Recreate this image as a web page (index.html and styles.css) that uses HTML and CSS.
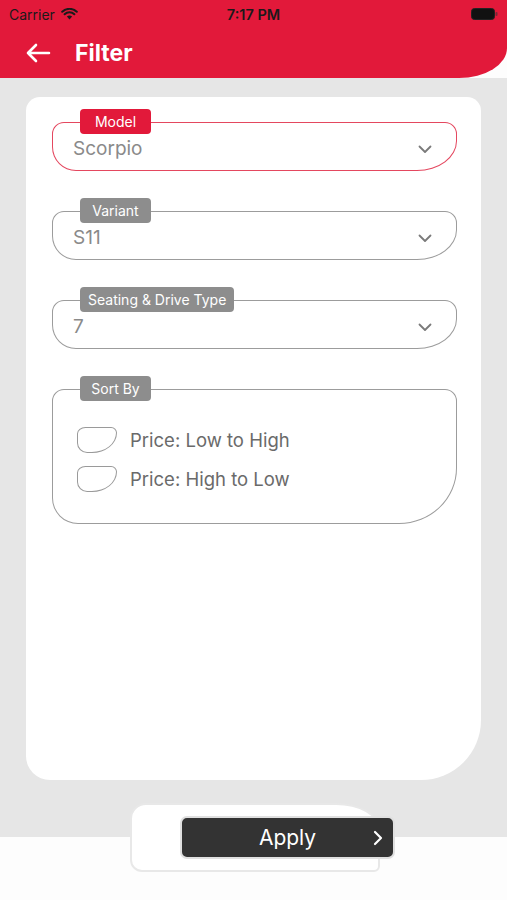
FILE: index.html
```html
<!DOCTYPE html>
<html>
<head>
<meta charset="utf-8">
<link rel="stylesheet" href="styles.css">
</head>
<body>
<div class="page">
  <header class="header">
    <div class="status">
      <div class="status-left">
        <span>Carrier</span>
        <svg class="wifi" width="17" height="12" viewBox="0 0 17 12"><path d="M8.5 11.5 L5.9 8.6 A3.8 3.8 0 0 1 11.1 8.6 Z" fill="#1a1a1a"/><path d="M3.6 6.3 A7 7 0 0 1 13.4 6.3" stroke="#1a1a1a" stroke-width="2" fill="none" stroke-linecap="round"/><path d="M1.2 3.8 A10.5 10.5 0 0 1 15.8 3.8" stroke="#1a1a1a" stroke-width="2" fill="none" stroke-linecap="round"/></svg>
      </div>
      <div class="status-time">7:17 PM</div>
      <div class="status-right">
        <svg width="27" height="12" viewBox="0 0 27 12"><rect x="0.5" y="0.5" width="23" height="11" rx="3" fill="#111" stroke="#222"/><rect x="24.5" y="4" width="2" height="4" rx="1" fill="#333" opacity="0.6"/></svg>
      </div>
    </div>
    <div class="nav">
      <svg class="back" width="26" height="20" viewBox="0 0 26 20"><path d="M24 10 H3 M11 2 L3 10 L11 18" stroke="#fff" stroke-width="2.6" fill="none" stroke-linecap="round" stroke-linejoin="round"/></svg>
      <h1 class="title">Filter</h1>
    </div>
  </header>

  <main class="body-area">
    <section class="card">
      <div class="field">
        <span class="tag tag-red">Model</span>
        <div class="box box-red">
          <span class="value">Scorpio</span>
          <svg class="chev" width="14" height="9" viewBox="0 0 14 9"><path d="M1.5 1.5 L7 7 L12.5 1.5" stroke="#7a7a7a" stroke-width="1.8" fill="none" stroke-linecap="round" stroke-linejoin="round"/></svg>
        </div>
      </div>
      <div class="field">
        <span class="tag">Variant</span>
        <div class="box">
          <span class="value">S11</span>
          <svg class="chev" width="14" height="9" viewBox="0 0 14 9"><path d="M1.5 1.5 L7 7 L12.5 1.5" stroke="#7a7a7a" stroke-width="1.8" fill="none" stroke-linecap="round" stroke-linejoin="round"/></svg>
        </div>
      </div>
      <div class="field">
        <span class="tag">Seating &amp; Drive Type</span>
        <div class="box">
          <span class="value">7</span>
          <svg class="chev" width="14" height="9" viewBox="0 0 14 9"><path d="M1.5 1.5 L7 7 L12.5 1.5" stroke="#7a7a7a" stroke-width="1.8" fill="none" stroke-linecap="round" stroke-linejoin="round"/></svg>
        </div>
      </div>
      <div class="field">
        <span class="tag">Sort By</span>
        <div class="box sort-box">
          <div class="opt"><span class="radio"></span><span class="opt-text">Price: Low to High</span></div>
          <div class="opt"><span class="radio"></span><span class="opt-text">Price: High to Low</span></div>
        </div>
      </div>
    </section>

    <div class="apply-wrap">
      <button class="apply">
        <span class="apply-text">Apply</span>
        <svg class="apply-chev" width="10" height="16" viewBox="0 0 10 16"><path d="M2 2 L8 8 L2 14" stroke="#fff" stroke-width="2.2" fill="none" stroke-linecap="round" stroke-linejoin="round"/></svg>
      </button>
    </div>
  </main>
</div>
</body>
</html>
```

FILE: styles.css
```css
* { box-sizing: border-box; }
html, body { margin: 0; padding: 0; }
body {
  width: 507px;
  height: 900px;
  overflow: hidden;
  background: #fdfdfd;
  font-family: Inter, "Liberation Sans", sans-serif;
}
.page { width: 507px; height: 900px; display: flex; flex-direction: column; }

.header {
  background: #e2193a;
  height: 78px;
  border-bottom-right-radius: 48px 30px;
  display: flex;
  flex-direction: column;
}
.status {
  height: 28px;
  display: flex;
  align-items: center;
  justify-content: space-between;
  padding: 0 9px 0 9px;
  color: #1a1a1a;
  font-size: 14px;
}
.status-left { display: flex; align-items: center; gap: 6px; width: 120px; }
.status-time { font-weight: 600; font-size: 14.5px; }
.status-right { width: 120px; display: flex; justify-content: flex-end; }
.nav {
  flex: 1;
  display: flex;
  align-items: center;
  padding: 0 0 0 25px;
  gap: 24px;
}
.title {
  margin: 0;
  color: #fff;
  font-size: 23px;
  font-weight: 700;
}

.body-area {
  flex: 1;
  background: linear-gradient(to bottom, #e6e6e6 0, #e6e6e6 759px, #fdfdfd 759px);
  padding: 19px 26px 0 26px;
  display: flex;
  flex-direction: column;
}
.card {
  background: #fff;
  height: 683px;
  border-radius: 14px 14px 60px 24px;
  padding: 12px 24px 0 26px;
  display: flex;
  flex-direction: column;
  gap: 27px;
}
.field { display: flex; flex-direction: column; }
.tag {
  align-self: flex-start;
  margin-left: 28px;
  margin-bottom: -12px;
  position: relative;
  z-index: 1;
  height: 25px;
  padding: 0 8px;
  border-radius: 4px;
  background: #8d8d8d;
  color: #fff;
  font-size: 14px;
  line-height: 25px;
  min-width: 71px;
  text-align: center;
}
.tag-red { background: #e2193a; }
.box {
  height: 49px;
  border: 1.3px solid #9c9c9c;
  border-radius: 12px 12px 40px 24px / 12px 12px 30px 24px;
  display: flex;
  align-items: center;
  justify-content: space-between;
  padding: 4px 24px 0 20px;
}
.box-red { border-color: #e4475f; }
.value { color: #8a8a8a; font-size: 19px; }
.chev { margin-top: 2px; }

.sort-box {
  height: 135px;
  display: flex;
  flex-direction: column;
  align-items: flex-start;
  justify-content: flex-start;
  gap: 13px;
  padding: 37px 0 0 24px;
  border-radius: 12px 12px 58px 26px / 12px 12px 56px 26px;
}
.opt { display: flex; align-items: center; gap: 13px; height: 26px; }
.radio {
  width: 40px;
  height: 26px;
  border: 1.3px solid #9a9a9a;
  border-radius: 10px 7px 30px 12px / 8px 7px 24px 12px;
}
.opt-text { color: #6a6a6a; font-size: 18.5px; }

.apply-wrap {
  margin: 23px 0 0 104px;
  width: 250px;
  height: 69px;
  background: #fff;
  border: 2px solid #e8e8e8;
  border-radius: 16px 44px 6px 12px / 16px 26px 6px 12px;
  padding: 11px 0 0 48px;
}
.apply {
  width: 215px;
  height: 43px;
  margin: 0;
  background: #333;
  border: 2px solid #e0e0e0;
  border-radius: 7px;
  display: flex;
  align-items: center;
  justify-content: center;
  position: relative;
  font-family: inherit;
  padding: 0;
}
.apply-text { color: #fff; font-size: 21px; }
.apply-chev { position: absolute; right: 10px; top: 12px; }
```
